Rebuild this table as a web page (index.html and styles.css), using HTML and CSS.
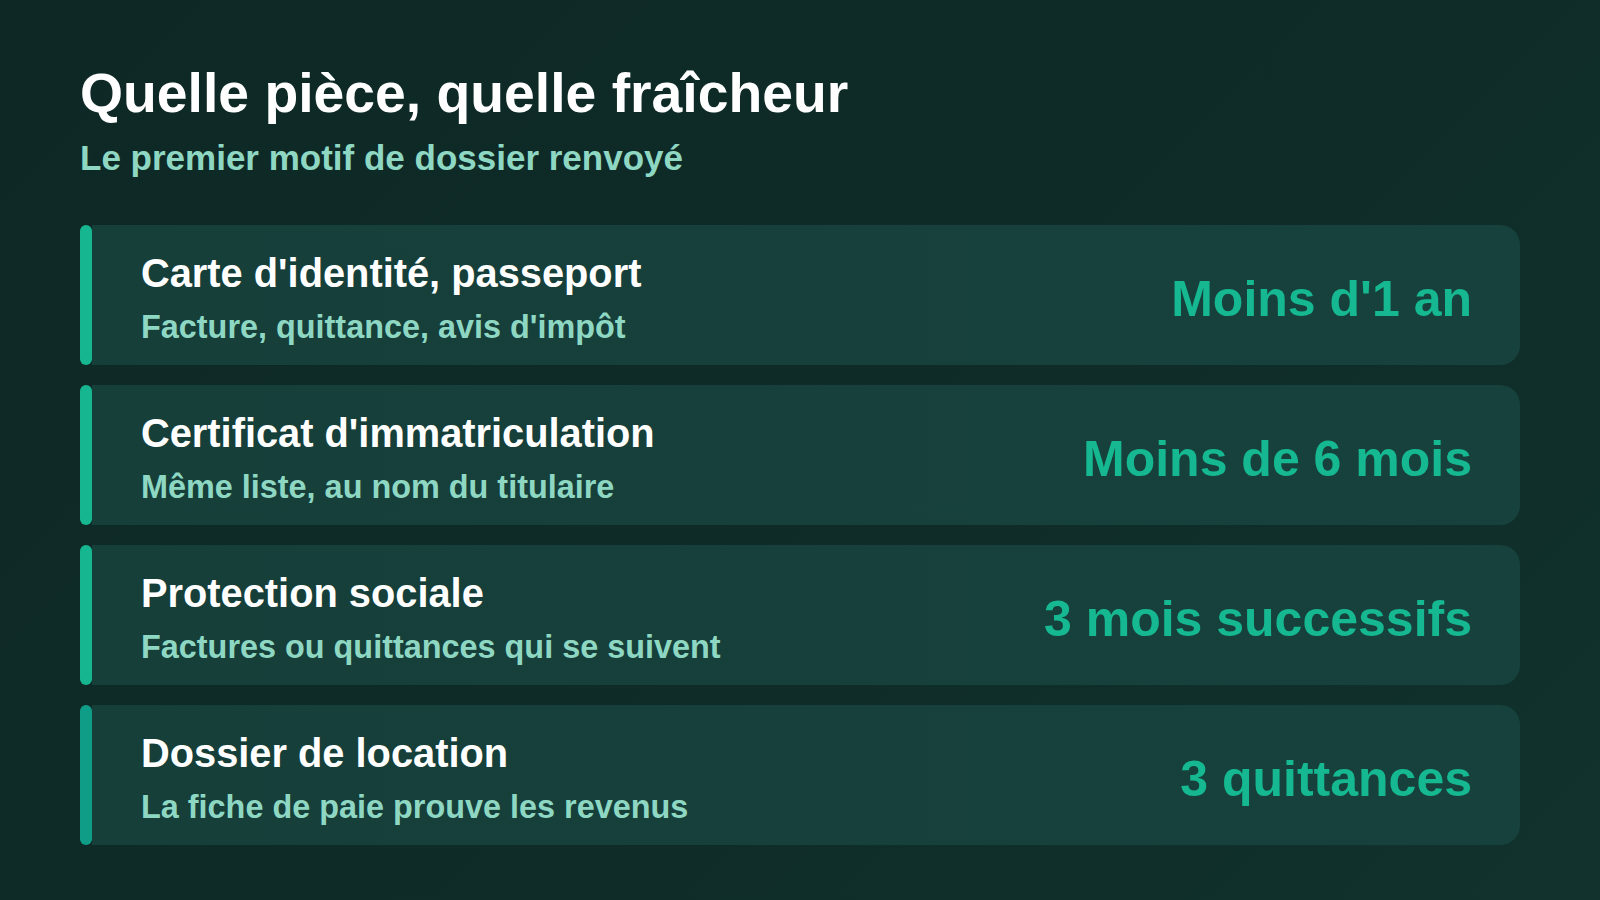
FILE: index.html
```html
<!DOCTYPE html>
<html lang="fr">
<head>
  <meta charset="UTF-8" />
  <meta name="viewport" content="width=device-width, initial-scale=1" />
  <title>Quelle pièce, quelle fraîcheur</title>
  <link rel="stylesheet" href="styles.css">
</head>
<body>
  <div class="slide">
    <h1>Quelle pièce, quelle fraîcheur</h1>
    <p class="lead">Le premier motif de dossier renvoyé</p>

    <div class="rows">
      <div class="row">
        <div class="bar"></div>
        <div class="card">
          <div class="text">
            <div class="name">Carte d'identité, passeport</div>
            <div class="detail">Facture, quittance, avis d'impôt</div>
          </div>
          <div class="value">Moins d'1 an</div>
        </div>
      </div>

      <div class="row">
        <div class="bar"></div>
        <div class="card">
          <div class="text">
            <div class="name">Certificat d'immatriculation</div>
            <div class="detail">Même liste, au nom du titulaire</div>
          </div>
          <div class="value">Moins de 6 mois</div>
        </div>
      </div>

      <div class="row">
        <div class="bar"></div>
        <div class="card">
          <div class="text">
            <div class="name">Protection sociale</div>
            <div class="detail">Factures ou quittances qui se suivent</div>
          </div>
          <div class="value">3 mois successifs</div>
        </div>
      </div>

      <div class="row">
        <div class="bar bar-dark"></div>
        <div class="card">
          <div class="text">
            <div class="name">Dossier de location</div>
            <div class="detail">La fiche de paie prouve les revenus</div>
          </div>
          <div class="value">3 quittances</div>
        </div>
      </div>
    </div>
  </div>
</body>
</html>
```

FILE: styles.css
```css
body {
  margin: 0;
  font-family: 'Liberation Sans', Arial, sans-serif;
  background: linear-gradient(135deg, #0e2925 0%, #0f2c28 60%, #11322d 100%);
  color: #fff;
  min-height: 100vh;
}

.slide {
  padding: 60px 80px 0 80px;
}

h1 {
  margin: 0;
  font-size: 55.3px;
  line-height: 66px;
  font-weight: 700;
  color: #ffffff;
}

.lead {
  margin: 11px 0 0 0;
  font-size: 35px;
  line-height: 42px;
  font-weight: 700;
  color: #8ed8c3;
}

.rows {
  margin-top: 46px;
  display: flex;
  flex-direction: column;
  gap: 20px;
}

.row {
  display: flex;
}

.bar {
  width: 12px;
  border-radius: 6px;
  background-color: #16b690;
}

.bar-dark {
  background-color: #0f9d87;
}

.card {
  flex: 1;
  display: flex;
  justify-content: space-between;
  align-items: center;
  padding: 24px 48px 19px 49px;
  background: linear-gradient(90deg, #163f3a, #17413c);
  border-radius: 0 20px 20px 0;
}

.text {
  display: flex;
  flex-direction: column;
  gap: 11px;
}

.name {
  font-size: 39.8px;
  line-height: 48px;
  font-weight: 700;
  color: #ffffff;
}

.detail {
  font-size: 32.4px;
  line-height: 38px;
  font-weight: 700;
  color: #8ed8c3;
}

.value {
  margin-top: 2px;
  font-size: 50px;
  line-height: 58px;
  font-weight: 700;
  color: #15b890;
  white-space: nowrap;
}
```
